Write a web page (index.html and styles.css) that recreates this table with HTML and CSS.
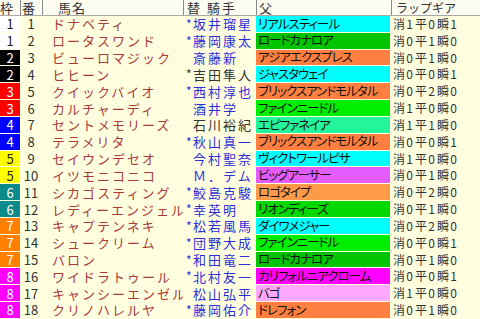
FILE: index.html
```html
<!DOCTYPE html>
<html lang="ja">
<head>
<meta charset="utf-8">
<link rel="stylesheet" href="styles.css">
</head>
<body>
<div class="table">
  <div class="head">
    <div class="h h-waku">枠</div>
    <div class="h h-num">番</div>
    <div class="h h-name">馬名</div>
    <div class="h h-jockey">替 騎手</div>
    <div class="h h-sire">父</div>
    <div class="h h-lap">ラップギア</div>
  </div>

  <div class="row"><div class="waku w1">1</div><div class="num">1</div><div class="name">ドナベティ</div><div class="jockey"><span class="star">*</span>坂井瑠星</div><div class="sire s-cyan">リアルスティール</div><div class="lap"><span class="k">消</span><span class="d">1</span><span class="k">平</span><span class="d">0</span><span class="k">瞬</span><span class="d">1</span></div></div>
  <div class="row"><div class="waku w1">1</div><div class="num">2</div><div class="name">ロータスワンド</div><div class="jockey"><span class="star">*</span>藤岡康太</div><div class="sire s-green">ロードカナロア</div><div class="lap"><span class="k">消</span><span class="d">0</span><span class="k">平</span><span class="d">1</span><span class="k">瞬</span><span class="d">0</span></div></div>
  <div class="row"><div class="waku w2">2</div><div class="num">3</div><div class="name">ビューロマジック</div><div class="jockey"><span class="star"></span>斎藤新</div><div class="sire s-orange">アジアエクスプレス</div><div class="lap"><span class="k">消</span><span class="d">0</span><span class="k">平</span><span class="d">1</span><span class="k">瞬</span><span class="d">0</span></div></div>
  <div class="row"><div class="waku w2">2</div><div class="num">4</div><div class="name">ヒヒーン</div><div class="jockey plain"><span class="star">*</span>吉田隼人</div><div class="sire s-cyan">ジャスタウェイ</div><div class="lap"><span class="k">消</span><span class="d">0</span><span class="k">平</span><span class="d">0</span><span class="k">瞬</span><span class="d">1</span></div></div>
  <div class="row"><div class="waku w3">3</div><div class="num">5</div><div class="name">クイックバイオ</div><div class="jockey"><span class="star">*</span>西村淳也</div><div class="sire s-orange">ブリックスアンドモルタル</div><div class="lap"><span class="k">消</span><span class="d">0</span><span class="k">平</span><span class="d">2</span><span class="k">瞬</span><span class="d">0</span></div></div>
  <div class="row"><div class="waku w3">3</div><div class="num">6</div><div class="name">カルチャーディ</div><div class="jockey"><span class="star"></span>酒井学</div><div class="sire s-lime">ファインニードル</div><div class="lap"><span class="k">消</span><span class="d">1</span><span class="k">平</span><span class="d">0</span><span class="k">瞬</span><span class="d">0</span></div></div>
  <div class="row"><div class="waku w4">4</div><div class="num">7</div><div class="name">セントメモリーズ</div><div class="jockey plain"><span class="star"></span>石川裕紀</div><div class="sire s-mint">エピファネイア</div><div class="lap"><span class="k">消</span><span class="d">1</span><span class="k">平</span><span class="d">1</span><span class="k">瞬</span><span class="d">0</span></div></div>
  <div class="row"><div class="waku w4">4</div><div class="num">8</div><div class="name">テラメリタ</div><div class="jockey"><span class="star">*</span>秋山真一</div><div class="sire s-orange">ブリックスアンドモルタル</div><div class="lap"><span class="k">消</span><span class="d">0</span><span class="k">平</span><span class="d">0</span><span class="k">瞬</span><span class="d">1</span></div></div>
  <div class="row"><div class="waku w5">5</div><div class="num">9</div><div class="name">セイウンデセオ</div><div class="jockey"><span class="star"></span>今村聖奈</div><div class="sire s-cyan">ヴィクトワールピサ</div><div class="lap"><span class="k">消</span><span class="d">1</span><span class="k">平</span><span class="d">0</span><span class="k">瞬</span><span class="d">0</span></div></div>
  <div class="row"><div class="waku w5">5</div><div class="num">10</div><div class="name">イツモニコニコ</div><div class="jockey"><span class="star"></span>Ｍ．デム</div><div class="sire s-lilac">ビッグアーサー</div><div class="lap"><span class="k">消</span><span class="d">0</span><span class="k">平</span><span class="d">1</span><span class="k">瞬</span><span class="d">0</span></div></div>
  <div class="row"><div class="waku w6">6</div><div class="num">11</div><div class="name">シカゴスティング</div><div class="jockey"><span class="star">*</span>鮫島克駿</div><div class="sire s-lorange">ロゴタイプ</div><div class="lap"><span class="k">消</span><span class="d">0</span><span class="k">平</span><span class="d">2</span><span class="k">瞬</span><span class="d">0</span></div></div>
  <div class="row"><div class="waku w6">6</div><div class="num">12</div><div class="name">レディーエンジェル</div><div class="jockey"><span class="star">*</span>幸英明</div><div class="sire s-green2">リオンディーズ</div><div class="lap"><span class="k">消</span><span class="d">0</span><span class="k">平</span><span class="d">1</span><span class="k">瞬</span><span class="d">0</span></div></div>
  <div class="row"><div class="waku w7">7</div><div class="num">13</div><div class="name">キャプテンネキ</div><div class="jockey"><span class="star">*</span>松若風馬</div><div class="sire s-cyan">ダイワメジャー</div><div class="lap"><span class="k">消</span><span class="d">0</span><span class="k">平</span><span class="d">2</span><span class="k">瞬</span><span class="d">0</span></div></div>
  <div class="row"><div class="waku w7">7</div><div class="num">14</div><div class="name">シュークリーム</div><div class="jockey"><span class="star">*</span>団野大成</div><div class="sire s-lime">ファインニードル</div><div class="lap"><span class="k">消</span><span class="d">0</span><span class="k">平</span><span class="d">0</span><span class="k">瞬</span><span class="d">1</span></div></div>
  <div class="row"><div class="waku w7">7</div><div class="num">15</div><div class="name">バロン</div><div class="jockey"><span class="star">*</span>和田竜二</div><div class="sire s-green">ロードカナロア</div><div class="lap"><span class="k">消</span><span class="d">0</span><span class="k">平</span><span class="d">1</span><span class="k">瞬</span><span class="d">0</span></div></div>
  <div class="row"><div class="waku w8">8</div><div class="num">16</div><div class="name">ワイドラトゥール</div><div class="jockey"><span class="star">*</span>北村友一</div><div class="sire s-magenta">カリフォルニアクローム</div><div class="lap"><span class="k">消</span><span class="d">0</span><span class="k">平</span><span class="d">0</span><span class="k">瞬</span><span class="d">1</span></div></div>
  <div class="row"><div class="waku w8">8</div><div class="num">17</div><div class="name">キャンシーエンゼル</div><div class="jockey"><span class="star"></span>松山弘平</div><div class="sire s-pink">バゴ</div><div class="lap"><span class="k">消</span><span class="d">1</span><span class="k">平</span><span class="d">0</span><span class="k">瞬</span><span class="d">0</span></div></div>
  <div class="row"><div class="waku w8">8</div><div class="num">18</div><div class="name">クリノハレルヤ</div><div class="jockey"><span class="star">*</span>藤岡佑介</div><div class="sire s-orange">ドレフォン</div><div class="lap"><span class="k">消</span><span class="d">0</span><span class="k">平</span><span class="d">1</span><span class="k">瞬</span><span class="d">0</span></div></div>
</div>
</body>
</html>
```
FILE: styles.css
```css
html, body {
  margin: 0;
  padding: 0;
  background: #ffffe0;
}
body {
  font-family: "Noto Sans CJK JP", "Noto Sans", sans-serif;
  font-size: 13px;
  color: #333;
  overflow: hidden;
}
.table {
  width: 480px;
  height: 319px;
  display: flex;
  flex-direction: column;
}
.head, .row {
  display: grid;
  grid-template-columns: 20px 22px 141px 73px 135px 89px;
}
.head {
  height: 16px;
  flex: 0 0 16px;
  box-sizing: border-box;
  border-bottom: 1px solid #a8a8a8;
  background: #fcfcf0;
}
.h {
  font-size: 13px;
  line-height: 15px;
  color: #333;
  white-space: nowrap;
}
.h-num, .h-name, .h-jockey, .h-sire, .h-lap {
  border-left: 1px solid #8a8a8a;
}
.h-waku { padding-left: 0; }
.h-num { padding-left: 1px; }
.h-name { padding-left: 15px; letter-spacing: 1px; }
.h-jockey { padding-left: 3px; letter-spacing: 2px; }
.h-sire { padding-left: 2px; }
.h-lap { padding-left: 4px; font-size: 12px; }

.row {
  flex: 1 1 0;
  min-height: 0;
}
.row > div {
  display: flex;
  align-items: center;
  white-space: nowrap;
  overflow: hidden;
  margin-bottom: 1px;
  line-height: 1;
}
.waku {
  justify-content: center;
  font-size: 13px;
  color: #fff;
}
.w1 { background: #ffffff; color: #222; }
.w2 { background: #000000; }
.w3 { background: #ff0000; }
.w4 { background: #0000ff; }
.w5 { background: #ffff00; color: #222; }
.w6 { background: #0a8a8a; }
.w7 { background: #ff8000; }
.w8 { background: #ff00ff; }

.num {
  justify-content: center;
  font-size: 13px;
  color: #333;
}
.name {
  padding-left: 10px;
  color: #a83a3a;
  letter-spacing: 2px;
}
.jockey {
  padding-left: 3px;
  color: #2e2ed8;
  letter-spacing: 2px;
}
.jockey.plain { color: #333; }
.star {
  display: inline-block;
  width: 7px;
  letter-spacing: 0;
  font-size: 12px;
}
.sire {
  padding-left: 2px;
  color: #111;
  font-size: 12.5px;
  font-feature-settings: "palt";
  letter-spacing: -1px;
  margin-right: 1px;
}
.s-cyan { background: #00ffff; }
.s-green { background: #00c400; }
.s-green2 { background: #00d800; }
.s-lime { background: #00ee00; }
.s-orange { background: #ff7f40; }
.s-lorange { background: #ff9a48; }
.s-mint { background: #22f59a; }
.s-lilac { background: #e45cff; }
.s-magenta { background: #ff00ff; }
.s-pink { background: #ffa8ff; }

.lap {
  padding-left: 2px;
  color: #333;
  font-size: 12px;
}
.lap .k {
  display: inline-block;
  width: 11px;
}
.lap .d {
  display: inline-block;
  width: 11px;
  text-align: center;
}
```
